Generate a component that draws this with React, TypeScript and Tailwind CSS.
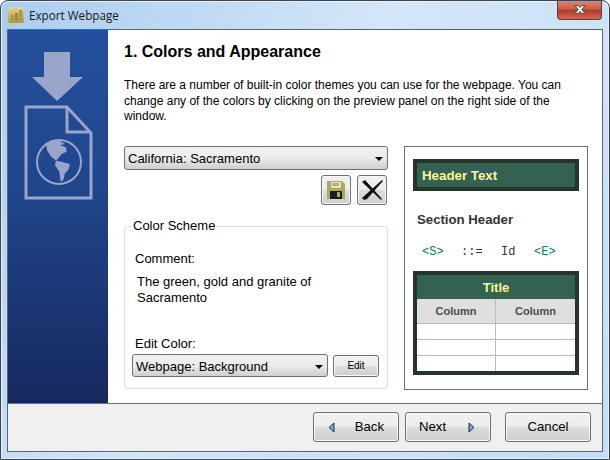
const sans = { fontFamily: '"Liberation Sans", Arial, sans-serif' }

function Caret() {
  return <span className="ml-auto h-0 w-0 border-x-[4px] border-t-[4px] border-x-transparent border-t-black" />
}

function Combo({ label, className }: { label: string; className: string }) {
  return (
    <div className={`flex items-center rounded-[3px] border border-[#707070] bg-gradient-to-b from-[#f2f2f2] via-[#ebebeb] to-[#cfcfcf] pl-[3px] pr-[4px] text-[13px] text-black ${className}`}>
      <span>{label}</span>
      <Caret />
    </div>
  )
}

function Button({ children, className }: { children: React.ReactNode; className: string }) {
  return (
    <div className={`flex items-center justify-center rounded-[3px] border border-[#707070] bg-[linear-gradient(#f2f2f2_0%,#ebebeb_50%,#dddddd_50%,#cfcfcf_100%)] text-black shadow-[inset_0_0_0_1px_#f7f7f7] ${className}`}>
      {children}
    </div>
  )
}

function SideArt() {
  return (
    <svg width="100" height="150" viewBox="0 0 100 150" className="mt-[21px]">
      <path d="M36 1H62V26H75L49 50 24 26H36z" fill="#9aa5cc" />
      <path d="M18 56H59L83 82V147H18z" fill="none" stroke="#9aa5cc" strokeWidth="3" />
      <path d="M59 56V81H83" fill="none" stroke="#9aa5cc" strokeWidth="3" />
      <circle cx="51" cy="111" r="22" fill="none" stroke="#9aa5cc" strokeWidth="2" />
      <path d="M38 94 42 89.700 50.300 89 57 93 52 94 58 96.300 58.700 100.700 53.700 103 50.300 107.300 48 109.700 42.700 105 39.300 99.700z" fill="#9aa5cc" />
      <path d="M48 109.700 53.700 110.700 62 113.300 60.300 119 57 122.300 55.300 129 52.700 130.700 51.300 120.700 47 114z" fill="#9aa5cc" />
    </svg>
  )
}

export default function App() {
  return (
    <div className="flex h-[460px] w-[610px] flex-col overflow-hidden rounded-t-[8px] border border-[#3c4450] bg-[linear-gradient(120deg,#a9cdef_0%,#d4e6f8_45%,#c4def7_100%)] pb-[7px] text-[12px] shadow-[inset_0_0_0_1px_#e6f1fb]" style={sans}>
      <div className="flex h-[28px] shrink-0 items-start pl-[7px] pr-[7px]">
        <div className="mt-[6px] flex h-4 w-4 items-end justify-center gap-[1px] rounded-[2px] bg-gradient-to-b from-[#e6d490] to-[#b8953f] pb-[2px]">
          <span className="h-[6px] w-[3px] bg-[#a8964e]" />
          <span className="h-[8px] w-[3px] bg-[#98874a]" />
          <span className="h-[11px] w-[3px] bg-[#a8964e]" />
        </div>
        <span className="ml-[5px] mt-[6px] text-[11.700px] leading-4 text-[#1a1a1a]" style={{ fontFamily: '"Open Sans", sans-serif' }}>Export Webpage</span>
        <div className="-mt-px ml-auto flex h-[20px] w-[45px] items-center justify-center rounded-b-[4px] border border-t-0 border-[#6b3a36] bg-[linear-gradient(#d98a7c_0%,#c9604c_45%,#b23a26_55%,#cf6a50_100%)]">
          <svg width="14" height="11" viewBox="0 0 14 11">
            <path d="M2 1.500h3l2 2 2-2h3l-3.200 4 3.200 4h-3l-2-2-2 2H2l3.200-4z" fill="#f4f6f8" stroke="#4a4f5c" strokeWidth="1" />
          </svg>
        </div>
      </div>

      <div className="mx-[6px] flex min-h-0 flex-1 flex-col border border-[#5d6470] bg-white">
        <div className="flex min-h-0 flex-1">
          <aside className="flex w-[100px] shrink-0 flex-col bg-[linear-gradient(#234f9c_0%,#20478d_40%,#17285f_100%)]">
            <SideArt />
          </aside>

          <main className="min-w-0 flex-1 pl-[16px] pr-[14px] pt-[12px]">
            <h1 className="text-[16px] font-bold leading-[20px] text-black">1. Colors and Appearance</h1>
            <p className="mt-[16px] h-[46px] w-[468px] text-[12px] leading-[15.500px] text-black">
              There are a number of built-in color themes you can use for the webpage. You can change any of the colors by clicking on the preview panel on the right side of the window.
            </p>

            <div className="mt-[22px] flex">
              <section className="flex w-[264px] flex-col">
                <Combo label="California: Sacramento" className="h-[24px] pt-[2px]" />
                <div className="mt-[5px] flex justify-end gap-[6px] pr-px">
                  <Button className="h-[30px] w-[30px]">
                    <svg width="18" height="18" viewBox="0 0 18 18">
                      <path d="M0 0h15l3 3v15H0z" fill="#a8a85e" />
                      <rect x="4" y="1" width="10" height="6" fill="#e4e4c4" />
                      <rect x="5" y="2" width="7" height="3" fill="#b5b56a" />
                      <rect x="3" y="10" width="12" height="8" fill="#1c1c1c" />
                      <rect x="10" y="11" width="3" height="5" fill="#a8a85e" />
                    </svg>
                  </Button>
                  <Button className="h-[30px] w-[30px]">
                    <svg width="22" height="22" viewBox="0 0 22 22">
                      <path d="M1 3 4 1 21 20 20 21z" fill="#111" />
                      <path d="M21 1 22 2 6 20 3 21 1 19z" fill="#111" />
                    </svg>
                  </Button>
                </div>

                <fieldset className="mt-[14px] h-[170px] rounded-[4px] border border-[#d5dfe9] px-[7px]">
                  <legend className="px-[1px] text-[13px] leading-[14px] text-black">Color Scheme</legend>
                  <p className="ml-[3px] mt-[18px] text-[13px] leading-4">Comment:</p>
                  <p className="ml-[5px] mt-[7px] w-[210px] text-[13px] leading-4">The green, gold and granite of Sacramento</p>
                  <p className="ml-[3px] mt-[30px] text-[13px] leading-4">Edit Color:</p>
                  <div className="mt-[2px] flex items-center gap-[5px]">
                    <Combo label="Webpage: Background" className="h-[23px] w-[196px] pt-[2px]" />
                    <Button className="h-[22px] w-[46px] text-[10px]">Edit</Button>
                  </div>
                </fieldset>
              </section>

              <section className="ml-[16px] h-[244px] w-[184px] border border-[#707070] px-[8px] pt-[12px]">
                <div className="flex h-[32px] items-center border-4 border-[#25352c] bg-[#336350] pl-[5px] pt-[2px] text-[13.300px] font-bold text-[#fdf59a]">Header Text</div>
                <p className="ml-[4px] mt-[21px] text-[13.200px] font-bold leading-4 text-[#333]">Section Header</p>
                <div className="mt-[16px] flex text-[12px] leading-4" style={{ fontFamily: '"Liberation Mono", monospace' }}>
                  <span className="ml-[9px] w-[39px] text-[#0b7a4a]">&lt;S&gt;</span>
                  <span className="w-[40px] text-[#333]">::=</span>
                  <span className="w-[33px] text-[#333]">Id</span>
                  <span className="text-[#0b7a4a]">&lt;E&gt;</span>
                </div>
                <div className="mt-[11px] border-4 border-[#25352c] bg-white">
                  <div className="flex h-[24px] items-center justify-center bg-[#336350] pt-[2px] text-[13px] font-bold text-[#fdf59a]">Title</div>
                  <div className="grid grid-cols-[79px_1fr] text-[11px] font-bold text-[#4d4d4d]">
                    <div className="flex h-[25px] items-center justify-center border-b border-r border-[#bbb] bg-[#dfdfdf]">Column</div>
                    <div className="flex h-[25px] items-center justify-center border-b border-[#bbb] bg-[#dfdfdf]">Column</div>
                    <div className="h-[16px] border-b border-r border-[#bbb]" />
                    <div className="h-[16px] border-b border-[#bbb]" />
                    <div className="h-[16px] border-b border-r border-[#bbb]" />
                    <div className="h-[16px] border-b border-[#bbb]" />
                    <div className="h-[15px] border-r border-[#bbb]" />
                    <div className="h-[15px]" />
                  </div>
                </div>
              </section>
            </div>
          </main>
        </div>

        <footer className="flex h-[48px] shrink-0 items-start border-t border-[#6f6f6f] bg-[#f0f0f0] pl-[305px] pt-[8px] text-[13.200px]">
          <Button className="h-[30px] w-[86px]">
            <svg width="7" height="11" viewBox="0 0 7 11" className="ml-[14px]">
              <path d="M6 1 1 5.500 6 10z" fill="#7fa8dc" stroke="#1f2d42" />
            </svg>
            <span className="ml-auto mr-[14px]">Back</span>
          </Button>
          <Button className="ml-[6px] h-[30px] w-[86px]">
            <span className="ml-[13px]">Next</span>
            <svg width="7" height="11" viewBox="0 0 7 11" className="ml-auto mr-[15px]">
              <path d="M1 1 6 5.500 1 10z" fill="#7fa8dc" stroke="#1f2d42" />
            </svg>
          </Button>
          <Button className="ml-[14px] h-[30px] w-[86px]">Cancel</Button>
        </footer>
      </div>
    </div>
  )
}
